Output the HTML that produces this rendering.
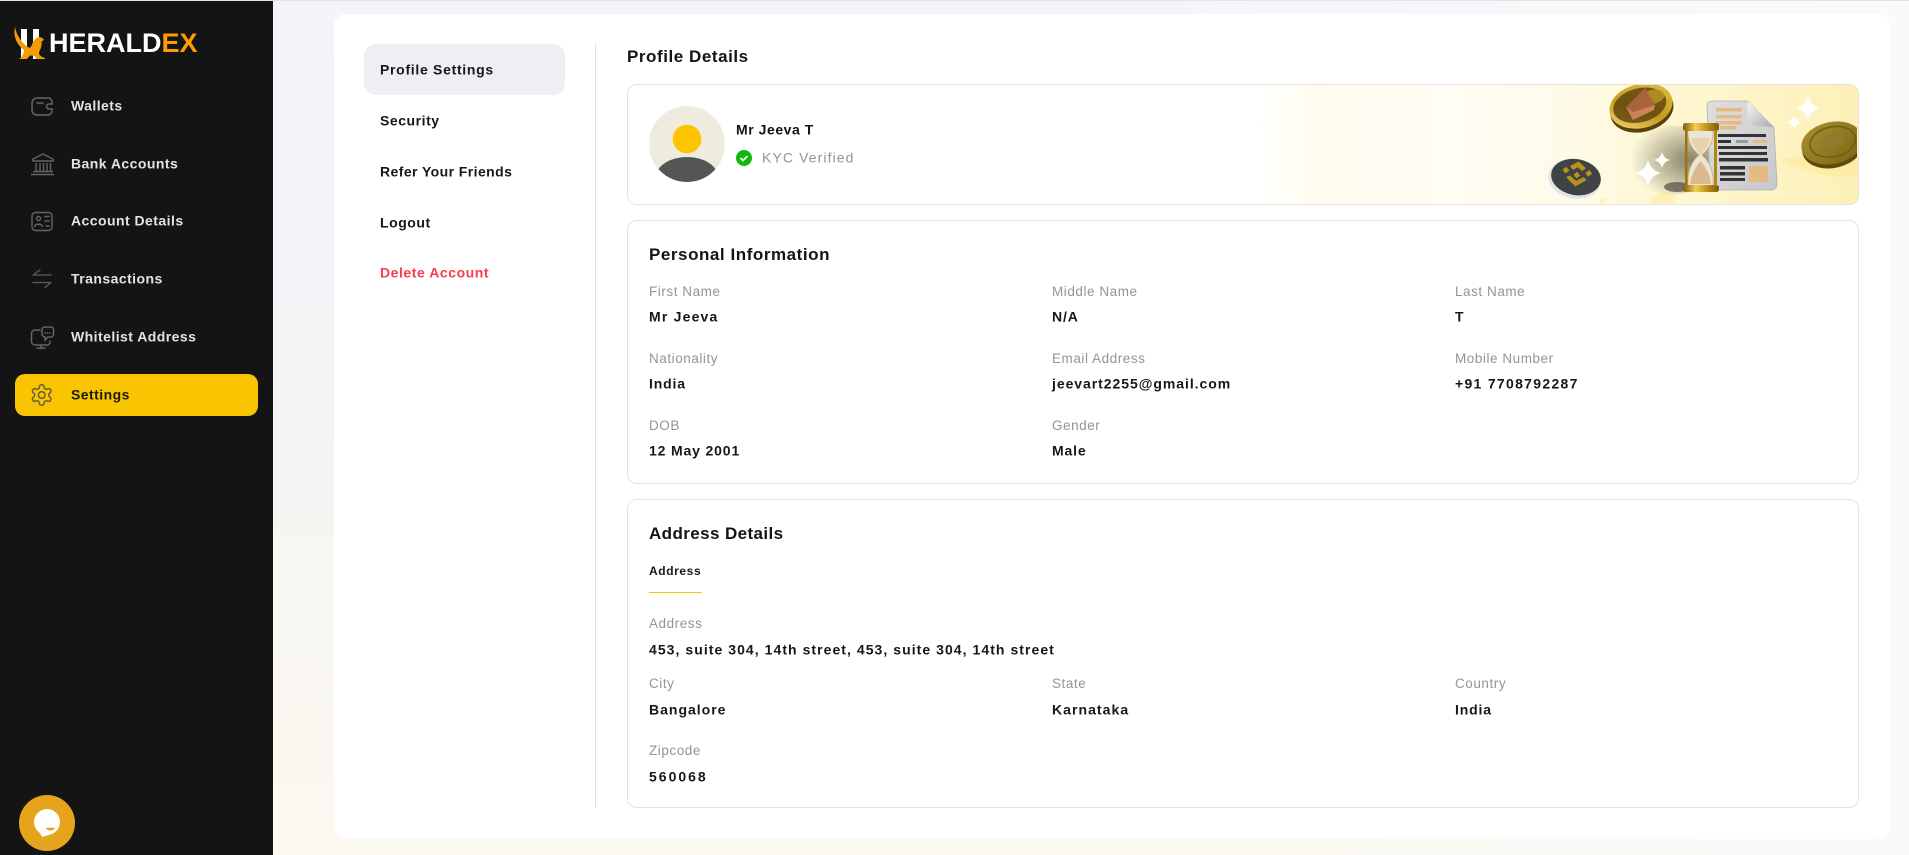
<!DOCTYPE html>
<html lang="en">
<head>
<meta charset="utf-8">
<title>HeraldEx Settings</title>
<style>
html,body{margin:0;padding:0;width:1909px;height:855px;overflow:hidden}
body{position:relative;font-family:"Liberation Sans",sans-serif;background:linear-gradient(90deg,rgba(250,250,250,0) 60%,#fafafa 100%),linear-gradient(180deg,#f5f5f8 0%,#f1f3f7 30%,#f8f6f1 72%,#fbf8f0 100%)}
.abs{position:absolute}
.strip{left:0;top:0;width:1909px;height:1px;background:#e8dff0}
.side{left:0;top:1px;width:273px;height:854px;background:#141414}
.active{left:15px;top:374px;width:243px;height:42px;border-radius:10px;background:#f9c400}
.panel{left:334px;top:14px;width:1556px;height:825px;border-radius:12px;background:#fff}
.sel{left:364px;top:44px;width:201px;height:51px;border-radius:12px;background:#eeeff3}
.div{left:595px;top:44px;width:1px;height:764px;background:#e4e2dc}
.card{left:627px;width:1230px;border:1px solid #e4e2dc;border-radius:10px;background:#fff;box-sizing:content-box}
.t{position:absolute;white-space:nowrap;transform:translateY(-50%);line-height:1.2}
.n{font-size:14px;font-weight:700;letter-spacing:.45px;color:#dfe3ea}
.m{font-size:14px;font-weight:700;letter-spacing:.55px;color:#15171c;margin-top:1px}
.h{font-size:17px;font-weight:700;letter-spacing:.55px;color:#111318;margin-top:1px}
.l{font-size:13.5px;letter-spacing:.55px;color:#8f9599;margin-top:1px}
.v{font-size:14px;font-weight:700;letter-spacing:.85px;color:#15171c}
svg.art{position:absolute;left:0;top:0;width:1909px;height:855px;pointer-events:none}
</style>
</head>
<body>
<div class="abs strip"></div>
<div class="abs side"></div>
<div class="abs active"></div>
<div class="abs panel"></div>
<div class="abs sel"></div>
<div class="abs div"></div>
<div class="abs card" style="top:84px;height:119px;background:linear-gradient(90deg,#fff 0,#fff 51%,#fffcef 56%,#fffdf4 67%,#fffbea 76%,#fef7d2 85%,#fdf0b8 100%)"></div>
<div class="abs card" style="top:220px;height:262px"></div>
<div class="abs card" style="top:499px;height:307px"></div>

<svg class="art" viewBox="0 0 1909 855" xmlns="http://www.w3.org/2000/svg">
<defs>
<clipPath id="bn"><rect x="628" y="85" width="1229" height="118" rx="9"/></clipPath>
<clipPath id="avc"><circle cx="687" cy="144" r="38"/></clipPath>
<linearGradient id="gold" x1="0" y1="1" x2="1" y2="0"><stop offset="0" stop-color="#f6dc78"/><stop offset=".45" stop-color="#c59a1f"/><stop offset="1" stop-color="#e9c24a"/></linearGradient>
<linearGradient id="gold2" x1="0" y1="0" x2="1" y2="0"><stop offset="0" stop-color="#7f5c0c"/><stop offset=".35" stop-color="#f2cf55"/><stop offset=".7" stop-color="#b98c16"/><stop offset="1" stop-color="#7a5a0c"/></linearGradient>
<linearGradient id="btc" x1="0" y1="0" x2="1" y2="1"><stop offset="0" stop-color="#a8902e"/><stop offset="1" stop-color="#7a6414"/></linearGradient>
<linearGradient id="paper" x1="0" y1="0" x2="1" y2="1"><stop offset="0" stop-color="#dedee0"/><stop offset="1" stop-color="#c8c8ca"/></linearGradient>
<linearGradient id="flap" x1="0" y1="0" x2="1" y2="1"><stop offset="0" stop-color="#f8f8f8"/><stop offset="1" stop-color="#a9a9ab"/></linearGradient>
<radialGradient id="shade" cx=".72" cy=".5" r=".6"><stop offset="0" stop-color="#66624e" stop-opacity=".78"/><stop offset="1" stop-color="#66624e" stop-opacity="0"/></radialGradient>
</defs>

<!-- logo -->
<rect x="21" y="29" width="6" height="30" fill="#fff"/>
<rect x="33" y="29" width="6" height="30" fill="#fff"/>
<path d="M15 27C13 35 16 44 24 50C24 54 22 57 19 59H27L30 55.500L35 56L36 59H45V58C41 57 39.500 55 38.500 53C41 49 42 45 41.500 41.500L44 40C42.500 37.500 40 36.500 37.500 37.500C34.500 39 32.500 42 31.500 46L29.500 48C23 44 17 37 15 27Z" fill="#f39c06"/>

<!-- wallet -->
<g fill="none" stroke="#646464" stroke-width="1.5" stroke-linecap="round">
<path d="M37 98h11a4 4 0 0 1 4 4v2h-3a2.500 2.500 0 0 0 0 5h3v2a4 4 0 0 1-4 4h-11a5 5 0 0 1-5-5v-7a5 5 0 0 1 5-5z"/>
<path d="M37 103h6"/>
</g>
<!-- bank -->
<g fill="none" stroke="#646464" stroke-width="1.4">
<path d="M33 161h20v-2l-10-5-10 5z"/>
<path d="M36 163v8M40 163v8M43.500 163v8M47 163v8M50.500 163v8M33 171.500h20M31 174.500h23"/>
</g>
<!-- id card -->
<g fill="none" stroke="#646464" stroke-width="1.4" stroke-linecap="round">
<rect x="32" y="212.500" width="20" height="18" rx="3.500"/>
<circle cx="38.500" cy="218.500" r="2"/>
<path d="M34.500 226.500c.5-3 7.500-3 8 0M45 216.500h4M45 221h4M46 226h3"/>
</g>
<!-- transactions -->
<g fill="none" stroke="#5e5e5e" stroke-width="1.3" stroke-linecap="round">
<path d="M33 275h18M33 275l7-5M33 282.500h18M51 282.500l-6 5"/>
</g>
<!-- whitelist -->
<g fill="none" stroke="#646464" stroke-width="1.5" stroke-linecap="round">
<path d="M40 330h-5a3.500 3.500 0 0 0-3.500 3.500v8a3.500 3.500 0 0 0 3.500 3.500h12a3 3 0 0 0 3-3v-1M41 345v3.500M37 348h8"/>
<path d="M44 327h7a2.500 2.500 0 0 1 2.500 2.500v5a2.500 2.500 0 0 1-2.500 2.500h-3l-3 3v-3a3 3 0 0 1-3-3v-4.500a2.500 2.500 0 0 1 2.500-2.500z"/>
<path d="M45 333h.4M47.300 333h.4M49.600 333h.4"/>
</g>
<!-- gear -->
<g fill="none" stroke="#5e5a3e" stroke-width="1.4" stroke-linejoin="round" transform="translate(41.700 395) scale(1.03) translate(-12 -12)">
<path d="M12.220 2h-.44a2 2 0 0 0-2 2v.18a2 2 0 0 1-1 1.730l-.43.25a2 2 0 0 1-2 0l-.15-.08a2 2 0 0 0-2.730.73l-.22.38a2 2 0 0 0 .73 2.730l.15.1a2 2 0 0 1 1 1.720v.51a2 2 0 0 1-1 1.740l-.15.09a2 2 0 0 0-.73 2.730l.22.38a2 2 0 0 0 2.730.73l.15-.08a2 2 0 0 1 2 0l.43.25a2 2 0 0 1 1 1.730V20a2 2 0 0 0 2 2h.44a2 2 0 0 0 2-2v-.18a2 2 0 0 1 1-1.730l.43-.25a2 2 0 0 1 2 0l.15.08a2 2 0 0 0 2.730-.73l.22-.39a2 2 0 0 0-.73-2.730l-.15-.08a2 2 0 0 1-1-1.740v-.5a2 2 0 0 1 1-1.740l.15-.09a2 2 0 0 0 .73-2.730l-.22-.38a2 2 0 0 0-2.730-.73l-.15.08a2 2 0 0 1-2 0l-.43-.25a2 2 0 0 1-1-1.730V4a2 2 0 0 0-2-2z"/>
<circle cx="12" cy="12" r="3.200"/>
</g>

<!-- chat -->
<circle cx="47" cy="823" r="28" fill="#e5a41b"/>
<circle cx="47" cy="822" r="13" fill="#fff"/>
<path d="M37 829l5.300 8 8-2.500z" fill="#fff"/>
<path d="M45.700 827.700h9.300c-1 3.600-7.600 3.800-9.300 0z" fill="#e5a41b"/>

<!-- avatar -->
<circle cx="687" cy="144" r="38" fill="#efecdf"/>
<circle cx="687" cy="139" r="14.300" fill="#fcc500"/>
<g clip-path="url(#avc)"><ellipse cx="687" cy="177" rx="31" ry="20" fill="#555"/></g>
<circle cx="744" cy="158" r="8" fill="#0dba0d"/>
<path d="M740.500 158l2.500 2.500 4.500-4.500" fill="none" stroke="#fff" stroke-width="1.800"/>

<!-- banner art -->
<g clip-path="url(#bn)">
<ellipse cx="1668" cy="160" rx="50" ry="35" fill="url(#shade)"/>
<ellipse cx="1677" cy="187" rx="13" ry="5" fill="#4c4c48" opacity=".7"/>
<path d="M1650 203c3-8 12-12 20-10s-2 6 6 10zM1598 203c2-5 6-6 8-3l-1 3zM1780 160c20-6 40-4 77-10v25c-30 6-55-6-77-15z" fill="#fde68a" opacity=".45"/>

<!-- ETH coin -->
<g transform="rotate(-14 1641 106)">
<ellipse cx="1641" cy="110" rx="32" ry="22" fill="#5b4208"/>
<ellipse cx="1641" cy="106" rx="32" ry="22" fill="url(#gold)"/>
<ellipse cx="1640" cy="105" rx="27" ry="17" fill="#52390a" opacity=".75"/>
<ellipse cx="1654" cy="100" rx="13" ry="7" fill="#c8a030" opacity=".7"/>
</g>
<path d="M1645 88l10 17-22 7-7-5z" fill="#a9643c"/>
<path d="M1626 107l7 5 22-7-1 5-21 10z" fill="#cc8357"/>

<!-- BNB coin -->
<g transform="rotate(10 1575.500 177)">
<ellipse cx="1575" cy="179" rx="26.500" ry="19.500" fill="#dfe4e2"/>
<ellipse cx="1576" cy="177" rx="25" ry="18" fill="#3f4344"/>
</g>
<g fill="#b8911e" transform="translate(1577 174) rotate(8) scale(1.15) translate(-1576 -175)">
<path d="M1576 164l7 5-3 3-4-3-4 3-3-3z"/>
<path d="M1563 173l3-3 3 3-3 3zM1583 173l3-3 3 3-3 3z"/>
<path d="M1576 173l3 3-3 3-3-3z"/>
<path d="M1576 186l-9-7 3-2 6 4 6-4 3 2z"/>
</g>

<!-- BTC coin -->
<g transform="rotate(-12 1832 143)">
<ellipse cx="1832" cy="147" rx="31" ry="21" fill="#5d4a0c"/>
<ellipse cx="1832" cy="143" rx="31" ry="21" fill="url(#btc)"/>
<ellipse cx="1833" cy="142" rx="23" ry="15" fill="none" stroke="#6f5c16" stroke-width="1.500"/>
<ellipse cx="1834" cy="141" rx="11" ry="7" fill="#8f7a2e"/>
</g>

<!-- document -->
<path d="M1711 101h37l26 27 3 56c0 4-3 6-6 6h-58c-2 0-3-2-3-4l-3-81c0-2 2-4 4-4z" fill="url(#paper)" stroke="#b0b0b2" stroke-width=".8"/>
<path d="M1748 101l26 26-15-1c-8 0-12-4-12-10z" fill="url(#flap)"/>
<g fill="#e6ba85">
<rect x="1716" y="108" width="26" height="3.500"/>
<rect x="1716" y="115" width="26" height="3.500"/>
<rect x="1716" y="121" width="26" height="3.500"/>
<rect x="1720" y="126" width="16" height="3.500"/>
<rect x="1753" y="140" width="14" height="3"/>
<rect x="1749" y="166" width="19" height="16"/>
</g>
<g fill="#333">
<rect x="1718" y="134" width="48" height="3"/>
<rect x="1718" y="140" width="13" height="3"/>
<rect x="1718" y="146" width="49" height="3"/>
<rect x="1719" y="152" width="48" height="3"/>
<rect x="1719" y="158" width="49" height="3.500"/>
<rect x="1720" y="166" width="25" height="3.500"/>
<rect x="1720" y="172" width="25" height="3.500"/>
<rect x="1720" y="178" width="25" height="3"/>
</g>
<rect x="1736" y="140" width="12" height="3" fill="#999"/>

<!-- hourglass -->
<path d="M1688 129h25c1 14-5 21-11 26 6 5 12 14 11 31h-25c-1-17 5-26 11-31-6-5-12-12-11-26z" fill="#ece4d6" stroke="#c8a25a" stroke-width=".6"/>
<path d="M1690 184c1-9 6-18 10.500-23 4.500 5 10 14 10.500 23z" fill="#dcb98c"/>
<path d="M1691 138h19c-2 7-5 12-9.500 17-4.500-5-7.500-10-9.500-17z" fill="#e8d2ae"/>
<rect x="1683" y="123" width="36" height="8" rx="2.500" fill="url(#gold2)"/>
<rect x="1683" y="185" width="36" height="7" rx="2.500" fill="url(#gold2)"/>
<rect x="1685" y="130" width="2.500" height="56" fill="#9a7410"/>
<rect x="1714" y="130" width="3" height="56" fill="#b08812"/>

<!-- sparkles -->
<g fill="#fff">
<path d="M1808 96q2.500 9.500 12 12q-9.500 2.500-12 12q-2.500-9.500-12-12q9.500-2.500 12-12z"/>
<path d="M1794 115q1.500 5.500 7 7q-5.500 1.500-7 7q-1.500-5.500-7-7q5.500-1.500 7-7z"/>
<path d="M1648 160q2.500 10.500 13 13q-10.500 2.500-13 13q-2.500-10.500-13-13q10.500-2.500 13-13z"/>
<path d="M1662 152q1.500 6.500 8 8q-6.500 1.500-8 8q-1.500-6.500-8-8q6.500-1.500 8-8z"/>
</g>
</g>
</svg>

<div class="t" style="left:49px;top:43px;font-size:27px;font-weight:700;letter-spacing:0;color:#fff">HERALD<span style="color:#ff9d00">EX</span></div>

<div class="t n" style="left:71px;top:106px">Wallets</div>
<div class="t n" style="left:71px;top:164px">Bank Accounts</div>
<div class="t n" style="left:71px;top:221px">Account Details</div>
<div class="t n" style="left:71px;top:279px">Transactions</div>
<div class="t n" style="left:71px;top:337px">Whitelist Address</div>
<div class="t n" style="left:71px;top:395px;color:#1c1a0c">Settings</div>

<div class="t m" style="left:380px;top:69px;letter-spacing:.7px">Profile Settings</div>
<div class="t m" style="left:380px;top:120px">Security</div>
<div class="t m" style="left:380px;top:171px;letter-spacing:.42px">Refer Your Friends</div>
<div class="t m" style="left:380px;top:222px">Logout</div>
<div class="t m" style="left:380px;top:272px;color:#fb3b4b">Delete Account</div>

<div class="t h" style="left:627px;top:56px">Profile Details</div>

<div class="t" style="left:736px;top:130px;font-size:14px;font-weight:700;letter-spacing:.55px;color:#111318">Mr Jeeva T</div>
<div class="t" style="left:762px;top:158px;font-size:14px;letter-spacing:1.1px;color:#8f9599">KYC Verified</div>

<div class="t h" style="left:649px;top:254px">Personal Information</div>
<div class="t l" style="left:649px;top:291px">First Name</div>
<div class="t v" style="left:649px;top:317px;letter-spacing:1.2px">Mr Jeeva</div>
<div class="t l" style="left:1052px;top:291px">Middle Name</div>
<div class="t v" style="left:1052px;top:317px">N/A</div>
<div class="t l" style="left:1455px;top:291px">Last Name</div>
<div class="t v" style="left:1455px;top:317px">T</div>
<div class="t l" style="left:649px;top:358px">Nationality</div>
<div class="t v" style="left:649px;top:384px">India</div>
<div class="t l" style="left:1052px;top:358px">Email Address</div>
<div class="t v" style="left:1052px;top:384px;letter-spacing:.95px">jeevart2255@gmail.com</div>
<div class="t l" style="left:1455px;top:358px">Mobile Number</div>
<div class="t v" style="left:1455px;top:384px;letter-spacing:1.3px">+91 7708792287</div>
<div class="t l" style="left:649px;top:425px">DOB</div>
<div class="t v" style="left:649px;top:451px">12 May 2001</div>
<div class="t l" style="left:1052px;top:425px">Gender</div>
<div class="t v" style="left:1052px;top:451px">Male</div>

<div class="t h" style="left:649px;top:533px;letter-spacing:.4px">Address Details</div>
<div class="t" style="left:649px;top:571px;font-size:12px;font-weight:700;letter-spacing:.6px;color:#15171c">Address</div>
<div class="abs" style="left:649px;top:592px;width:53px;height:1px;background:#fcc500"></div>
<div class="t l" style="left:649px;top:623px">Address</div>
<div class="t v" style="left:649px;top:650px;letter-spacing:1.05px">453, suite 304, 14th street, 453, suite 304, 14th street</div>
<div class="t l" style="left:649px;top:683px">City</div>
<div class="t v" style="left:649px;top:710px;letter-spacing:1px">Bangalore</div>
<div class="t l" style="left:1052px;top:683px">State</div>
<div class="t v" style="left:1052px;top:710px;letter-spacing:1.05px">Karnataka</div>
<div class="t l" style="left:1455px;top:683px">Country</div>
<div class="t v" style="left:1455px;top:710px">India</div>
<div class="t l" style="left:649px;top:750px">Zipcode</div>
<div class="t v" style="left:649px;top:777px;letter-spacing:2px">560068</div>
</body>
</html>
